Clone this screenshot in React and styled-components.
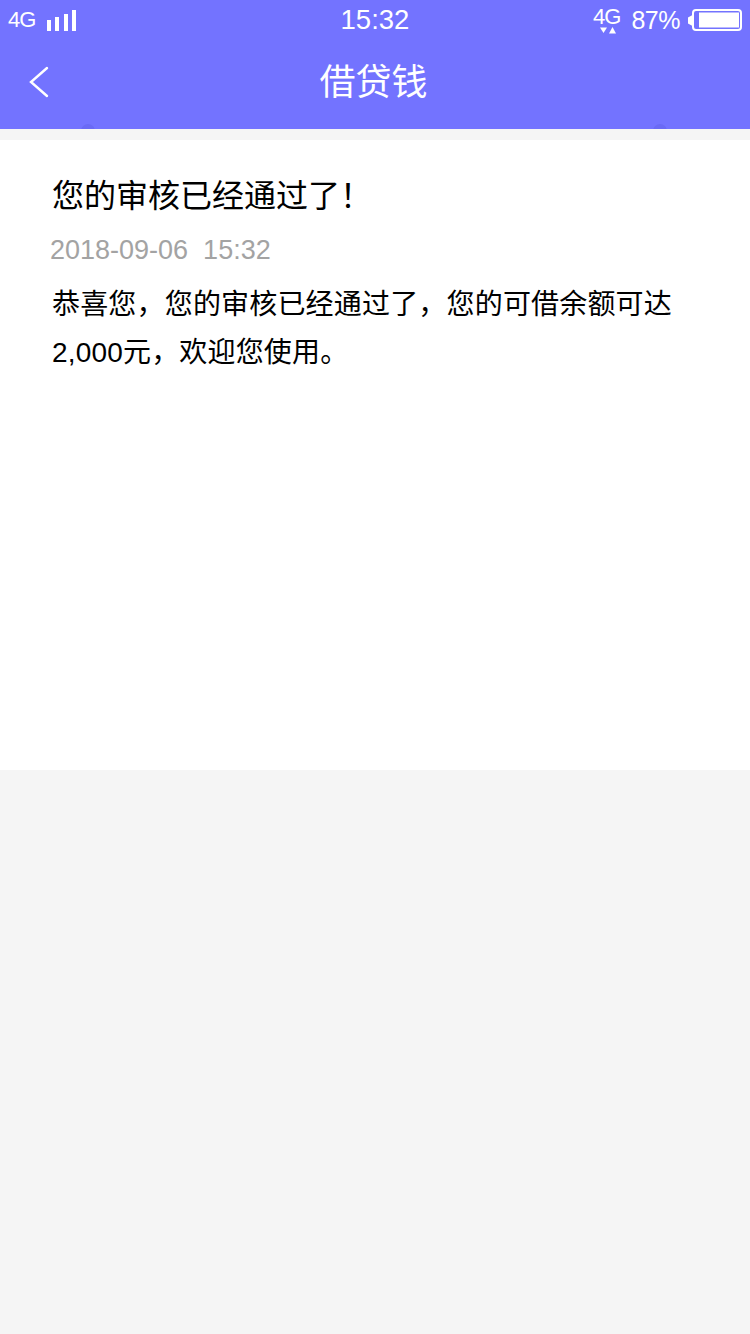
import styled, { createGlobalStyle } from "styled-components"

const GlobalStyle = createGlobalStyle`
   html, body {
      margin: 0;
      padding: 0;
      background-color: #f5f5f5;
   }
   body {
      font-family: "Liberation Sans", "Noto Sans CJK SC", sans-serif;
   }
   * {
      box-sizing: border-box;
   }
`
const Page = styled.div`
   width: 750px;
   height: 1334px;
   overflow: hidden;
   background-color: #f5f5f5;
`
const Header = styled.header`
   height: 129px;
   position: relative;
   overflow: hidden;
   background-color: #7373ff;
   color: #ffffff;
`
const Bump = styled.span`
   position: absolute;
   top: 124px;
   left: ${(props) => props.$left}px;
   width: 14px;
   height: 14px;
   border-radius: 50%;
   background-color: #6a6af5;
`
const StatusBar = styled.div`
   height: 40px;
   padding: 0 8px;
   display: grid;
   grid-template-columns: 1fr auto 1fr;
   align-items: center;
`
const StatusLeft = styled.div`
   display: flex;
   align-items: center;
   gap: 12px;
`
const StatusRight = styled.div`
   display: flex;
   align-items: center;
   justify-content: flex-end;
   gap: 8px;
`
const NetworkText = styled.span`
   font-size: 22px;
   letter-spacing: -1px;
`
const Clock = styled.span`
   font-size: 27.5px;
`
const Battery = styled.span`
   font-size: 25px;
   letter-spacing: -0.5px;
`
const NetworkStack = styled.div`
   display: flex;
   flex-direction: column;
   align-items: flex-end;
   width: 28px;
   margin-right: 3px;
   & span {
      font-size: 22px;
      line-height: 20px;
      letter-spacing: -1px;
   }
`
const NavBar = styled.nav`
   height: 80px;
   padding: 0 28px;
   position: relative;
   display: flex;
   align-items: center;
   & svg {
      margin-top: 3px;
   }
`
const NavTitle = styled.h1`
   position: absolute;
   left: 0;
   right: 3px;
   margin: -2px 0 0;
   font-size: 36px;
   font-weight: 400;
   text-align: center;
`
const Card = styled.main`
   height: 630px;
   margin-top: 11px;
   padding: 34px 52px 0;
   background-color: #ffffff;
   color: #000000;
`
const Title = styled.h2`
   margin: 0;
   font-size: 32px;
   line-height: 44px;
   font-weight: 400;
`
const Time = styled.div`
   margin: 15px 0 0 -2px;
   font-size: 27px;
   line-height: 34px;
   color: #a3a3a3;
   white-space: pre;
`
const Body = styled.p`
   margin: 14px -10px 0 0;
   font-size: 28px;
   line-height: 48px;
   letter-spacing: 0.18px;
`

function SignalIcon() {
   return (
      <svg width="30" height="21" viewBox="0 0 30 21" fill="#ffffff">
         <rect x="0" y="10" width="4" height="11" />
         <rect x="8" y="7" width="4" height="14" />
         <rect x="17" y="4" width="4" height="17" />
         <rect x="25" y="0" width="4" height="21" />
      </svg>
   )
}

function TransferIcon() {
   return (
      <svg width="24" height="7" viewBox="0 0 24 7" fill="#ffffff">
         <polygon points="4,0.5 11,0.5 7.5,6" />
         <polygon points="13,6.5 20,6.5 16.5,0" />
      </svg>
   )
}

function BatteryIcon() {
   return (
      <svg width="54" height="22" viewBox="0 0 54 22">
         <path d="M4.5 6 L0 8.5 V14.5 L4.5 17 Z" fill="#ffffff" />
         <rect x="5" y="1" width="48" height="20" rx="3" fill="none" stroke="#ffffff" strokeWidth="2" />
         <rect x="11" y="3.5" width="40" height="15" fill="#ffffff" />
      </svg>
   )
}

function BackIcon() {
   return (
      <svg width="22" height="32" viewBox="0 0 22 32" fill="none" stroke="#ffffff" strokeWidth="2.4" strokeLinecap="round">
         <polyline points="19,2 3,16 19,30" />
      </svg>
   )
}

export default function App() {
   return (
      <Page>
         <GlobalStyle />
         <Header>
            <StatusBar>
               <StatusLeft>
                  <NetworkText>4G</NetworkText>
                  <SignalIcon />
               </StatusLeft>
               <Clock>15:32</Clock>
               <StatusRight>
                  <NetworkStack>
                     <span>4G</span>
                     <TransferIcon />
                  </NetworkStack>
                  <Battery>87%</Battery>
                  <BatteryIcon />
               </StatusRight>
            </StatusBar>
            <NavBar>
               <BackIcon />
               <NavTitle>借贷钱</NavTitle>
            </NavBar>
            <Bump $left={81} />
            <Bump $left={653} />
         </Header>
         <Card>
            <Title>您的审核已经通过了！</Title>
            <Time>2018-09-06  15:32</Time>
            <Body>恭喜您，您的审核已经通过了，您的可借余额可达2,000元，欢迎您使用。</Body>
         </Card>
      </Page>
   )
}
